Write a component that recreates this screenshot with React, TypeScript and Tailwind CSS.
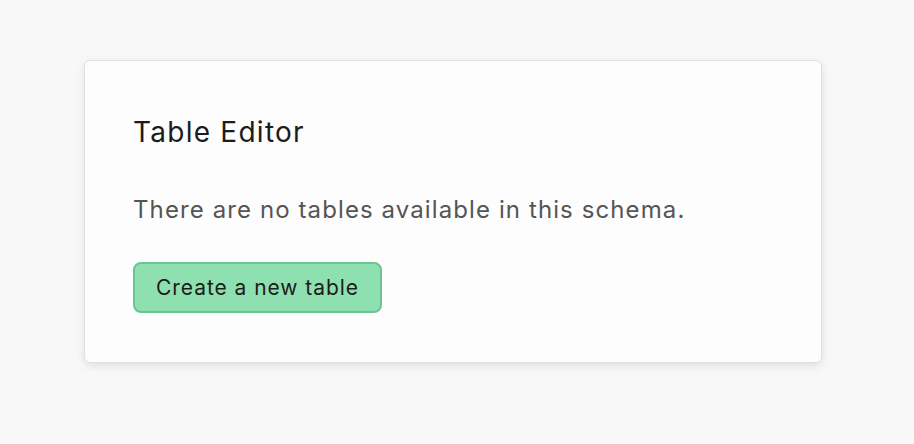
export default function App() {
  return (
    <div
      className="min-h-screen w-full bg-[#f8f8f8] pl-[84px] pt-[60px]"
      style={{ fontFamily: 'Inter, "Noto Sans", sans-serif' }}
    >
      <div className="w-[738px] h-[303px] rounded-md border border-[#e0e0e0] bg-[#fdfdfd] px-[48px] pt-[54px] shadow-[0_3px_8px_rgba(0,0,0,0.1)]">
        <h1 className="text-[28px] leading-[34px] tracking-[1.25px] text-[#1c1c1c]">Table Editor</h1>
        <p className="mt-[46px] text-[24px] leading-[30px] tracking-[1.1px] text-[#555555]">
          There are no tables available in this schema.
        </p>
        <button className="mt-[37px] flex h-[51px] items-center rounded-lg border-2 border-[#6cc58e] bg-[#8fe0b0] px-[21px] text-[21px] tracking-[0.95px] text-[#1c1c1c]">
          Create a new table
        </button>
      </div>
    </div>
  );
}
